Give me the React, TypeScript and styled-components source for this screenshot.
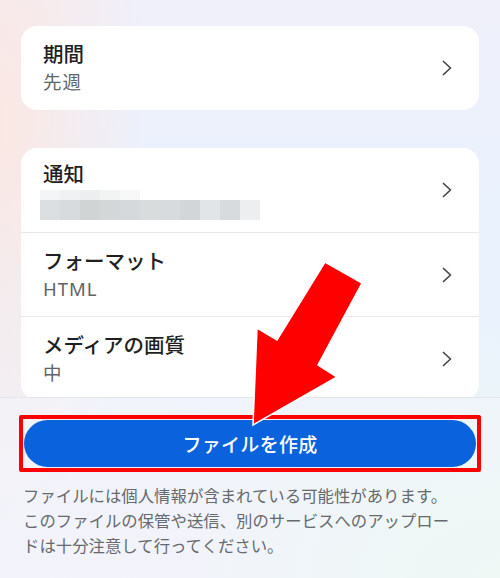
import { FunctionComponent } from 'react';
import styled, { createGlobalStyle } from 'styled-components';

const GlobalStyle = createGlobalStyle`
  * {
    box-sizing: border-box;
  }

  body {
    margin: 0;
    font-family: 'Noto Sans', 'Noto Sans CJK JP', sans-serif;
  }
`;

const StyledPage = styled.div`
  position: relative;
  width: 500px;
  height: 578px;
  display: flex;
  flex-direction: column;
  overflow: hidden;

  background:
    radial-gradient(ellipse 150px 420px at 0% 22%, rgba(252, 230, 224, 0.9), transparent),
    radial-gradient(ellipse 340px 260px at 100% 100%, rgba(236, 249, 240, 0.95), transparent),
    radial-gradient(ellipse 300px 300px at 20% 95%, rgba(243, 241, 250, 0.9), transparent),
    linear-gradient(180deg, #eff0fa 0%, #e9f2fd 40%, #ecf3fb 100%);
`;

const StyledScrollArea = styled.div`
  height: 397px;
  flex-shrink: 0;
  display: flex;
  flex-direction: column;
  gap: 38px;
  padding: 26px 21px 0;
  overflow: hidden;
`;

const StyledCard = styled.div`
  background-color: #ffffff;
  border-radius: 16px;
  flex-shrink: 0;
`;

const StyledRow = styled.div`
  height: 84px;
  display: flex;
  align-items: center;
  justify-content: space-between;
  padding: 0 26px 0 22px;

  & + & {
    border-top: 1px solid #e6e8eb;
  }
`;

const StyledRowText = styled.div`
  display: flex;
  flex-direction: column;
`;

const StyledTitle = styled.div`
  font-size: 20.5px;
  line-height: 28px;
  font-weight: 500;
  color: #1f1f1f;
`;

const StyledSubtitle = styled.div`
  font-size: 18.5px;
  line-height: 28px;
  letter-spacing: 1px;
  color: #5f6368;
`;

const StyledMosaic = styled.div`
  display: flex;
  flex-direction: column;
  margin: 2px 0 0 -3px;
  filter: blur(0.6px);
`;

const StyledMosaicLine = styled.div<{ $height: number }>`
  display: flex;
  height: ${({ $height }) => $height}px;
`;

const StyledMosaicCell = styled.div<{ $color: string }>`
  width: 20px;
  height: 100%;
  background-color: ${({ $color }) => $color};
`;

const StyledFooter = styled.div`
  flex: 1;
  display: flex;
  flex-direction: column;
  padding: 17px 19px 0;
  border-top: 1px solid #e2e6ec;
  background-color: rgba(244, 247, 251, 0.45);
`;

const StyledHighlight = styled.div`
  border: 4px solid #ff0000;
  border-radius: 2px;
  padding: 1px;
`;

const StyledCreateButton = styled.button`
  width: 100%;
  height: 47px;
  display: flex;
  align-items: center;
  justify-content: center;

  border: none;
  border-radius: 24px;
  background-color: #0a63dc;
  color: #ffffff;

  font-family: 'Noto Sans', 'Noto Sans CJK JP', sans-serif;
  font-size: 19px;
  font-weight: 500;
  letter-spacing: 0.3px;
`;

const StyledNote = styled.p`
  margin: 11px 0 0;
  padding: 0 4px;
  font-size: 16.4px;
  line-height: 25px;
  white-space: nowrap;
  color: #66696e;
`;

const StyledArrow = styled.svg`
  position: absolute;
  left: 0;
  top: 0;
  pointer-events: none;
`;

const topMosaic = ['#f4f5f6', '#f0f1f2', '#eceeef', '#f2f4f4', '#f7f8f7'];
const bottomMosaic = [
  '#dcdfe1',
  '#d8dbdd',
  '#d0d4d5',
  '#d3d7d8',
  '#d6d9db',
  '#d8dcdd',
  '#d8dbdd',
  '#d3d6d8',
  '#e2e5e8',
  '#d8dbdd',
  '#eceeef',
];

const Chevron: FunctionComponent = () => (
  <svg width='12' height='16' viewBox='0 0 12 16'>
    <polyline
      points='2.5,1.5 9.5,8 2.5,14.5'
      fill='none'
      stroke='#44474b'
      strokeWidth='1.7'
      strokeLinecap='round'
      strokeLinejoin='round'
    />
  </svg>
);

type SettingProps = {
  title: string;
  value?: string;
};

const SettingRow: FunctionComponent<SettingProps> = ({ title, value }) => (
  <StyledRow>
    <StyledRowText>
      <StyledTitle>{title}</StyledTitle>
      {value ? (
        <StyledSubtitle>{value}</StyledSubtitle>
      ) : (
        <StyledMosaic>
          <StyledMosaicLine $height={10}>
            {topMosaic.map((color, i) => (
              <StyledMosaicCell key={i} $color={color} />
            ))}
          </StyledMosaicLine>
          <StyledMosaicLine $height={20}>
            {bottomMosaic.map((color, i) => (
              <StyledMosaicCell key={i} $color={color} />
            ))}
          </StyledMosaicLine>
        </StyledMosaic>
      )}
    </StyledRowText>
    <Chevron />
  </StyledRow>
);

export default function App() {
  return (
    <>
      <GlobalStyle />
      <StyledPage>
        <StyledScrollArea>
          <StyledCard>
            <SettingRow title='期間' value='先週' />
          </StyledCard>
          <StyledCard>
            <SettingRow title='通知' />
            <SettingRow title='フォーマット' value='HTML' />
            <SettingRow title='メディアの画質' value='中' />
          </StyledCard>
        </StyledScrollArea>

        <StyledFooter>
          <StyledHighlight>
            <StyledCreateButton>ファイルを作成</StyledCreateButton>
          </StyledHighlight>
          <StyledNote>
            ファイルには個人情報が含まれている可能性があります。
            <br />
            このファイルの保管や送信、別のサービスへのアップロー
            <br />
            ドは十分注意して行ってください。
          </StyledNote>
        </StyledFooter>

        <StyledArrow width='500' height='578' viewBox='0 0 500 578'>
          <polygon
            points='325,262 362,283 318,365 337,377 253,425 257,328 277,340'
            fill='#ff0000'
            stroke='#ffffff'
            strokeWidth='1.5'
            strokeLinejoin='miter'
          />
        </StyledArrow>
      </StyledPage>
    </>
  );
}
